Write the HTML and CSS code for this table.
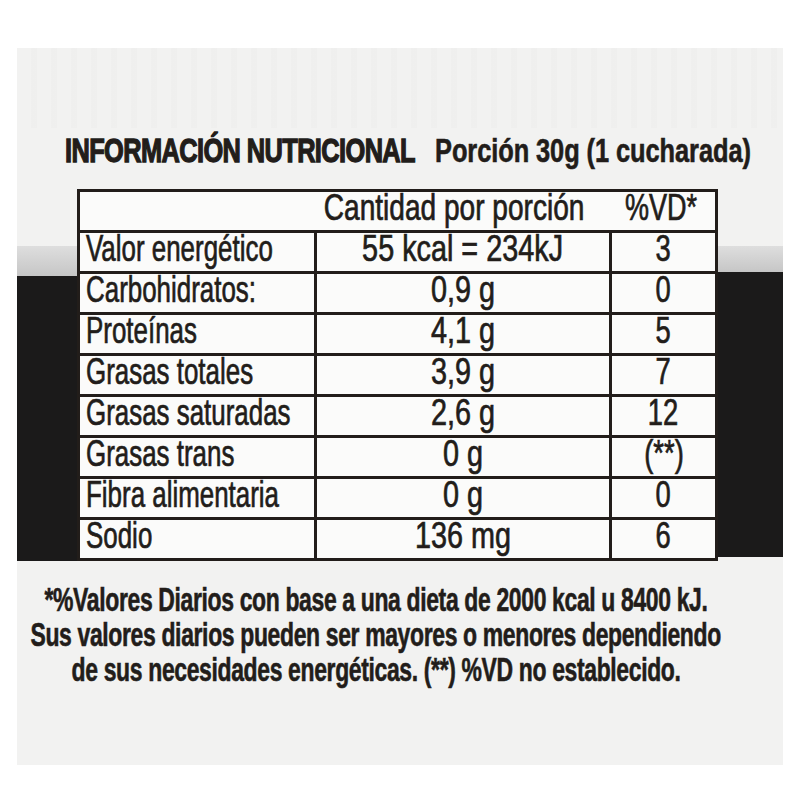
FILE: index.html
```html
<!DOCTYPE html>
<html lang="es">
<head>
<meta charset="utf-8">
<title>Información nutricional</title>
<link rel="stylesheet" href="styles.css">
</head>
<body>
<div class="panel">
  <div class="ridges"></div>
  <div class="title"><span class="tq"><span class="t1">INFORMACIÓN NUTRICIONAL</span><span class="t2">Porción 30g (1 cucharada)</span></span></div>
  <div class="mid">
    <div class="side left"><div class="gap"></div><div class="grey"></div><div class="dark"></div></div>
    <div class="table">
      <div class="hdr"><span class="cell c1"></span><span class="cell c2 h2"><span class="sq">Cantidad por porción</span></span><span class="cell c3 h3"><span class="sq">%VD*</span></span></div>
      <div class="row"><span class="cell c1"><span class="sq">Valor energético</span></span><span class="cell c2"><span class="sq">55 kcal = 234kJ</span></span><span class="cell c3"><span class="sq">3</span></span></div>
      <div class="row"><span class="cell c1"><span class="sq">Carbohidratos:</span></span><span class="cell c2"><span class="sq">0,9 g</span></span><span class="cell c3"><span class="sq">0</span></span></div>
      <div class="row"><span class="cell c1"><span class="sq">Proteínas</span></span><span class="cell c2"><span class="sq">4,1 g</span></span><span class="cell c3"><span class="sq">5</span></span></div>
      <div class="row"><span class="cell c1"><span class="sq">Grasas totales</span></span><span class="cell c2"><span class="sq">3,9 g</span></span><span class="cell c3"><span class="sq">7</span></span></div>
      <div class="row"><span class="cell c1"><span class="sq">Grasas saturadas</span></span><span class="cell c2"><span class="sq">2,6 g</span></span><span class="cell c3"><span class="sq">12</span></span></div>
      <div class="row"><span class="cell c1"><span class="sq">Grasas trans</span></span><span class="cell c2"><span class="sq">0 g</span></span><span class="cell c3"><span class="sq">(**)</span></span></div>
      <div class="row"><span class="cell c1"><span class="sq">Fibra alimentaria</span></span><span class="cell c2"><span class="sq">0 g</span></span><span class="cell c3"><span class="sq">0</span></span></div>
      <div class="row"><span class="cell c1"><span class="sq">Sodio</span></span><span class="cell c2"><span class="sq">136 mg</span></span><span class="cell c3"><span class="sq">6</span></span></div>
    </div>
    <div class="side right"><div class="gap"></div><div class="grey"></div><div class="dark"></div></div>
  </div>
  <div class="foot">
    <p><span class="fq">*%Valores Diarios con base a una dieta de 2000 kcal u 8400 kJ.</span></p>
    <p><span class="fq">Sus valores diarios pueden ser mayores o menores dependiendo</span></p>
    <p><span class="fq">de sus necesidades energéticas. (**) %VD no establecido.</span></p>
  </div>
</div>
</body>
</html>
```
FILE: styles.css
```css
html, body {
  margin: 0;
  padding: 0;
  background: #ffffff;
}
body {
  font-family: "Liberation Sans", Arial, sans-serif;
  color: #221d1a;
}
.panel {
  position: relative;
  margin: 48px 0 0 17px;
  width: 766px;
  height: 717px;
  background: #f2f2f1;
  display: flex;
  flex-direction: column;
  overflow: hidden;
}
.ridges {
  position: absolute;
  left: 0;
  top: 0;
  width: 100%;
  height: 80px;
  background: repeating-linear-gradient(90deg, rgba(0,0,0,0) 0 14px, rgba(0,0,0,0.012) 14px 20px);
}
.title {
  position: relative;
  padding: 84px 0 0 48px;
  height: 38px;
  line-height: 38px;
  white-space: nowrap;
  font-weight: 700;
  font-size: 33px;
}
.tq {
  display: inline-block;
  transform: scaleX(0.77);
  transform-origin: left center;
}
.t1 {
  letter-spacing: -0.8px;
  margin-right: 26px;
  -webkit-text-stroke: 1.3px #221d1a;
}
.t2 {
  letter-spacing: -0.1px;
  -webkit-text-stroke: 0.6px #221d1a;
}
.mid {
  margin-top: 19px;
  display: flex;
}
.side {
  display: flex;
  flex-direction: column;
}
.side.left { width: 60px; }
.side.right { width: 65px; }
.side .gap { height: 57px; }
.side .grey {
  height: 30px;
  background: linear-gradient(180deg, #dedede, #c6c6c6);
}
.side .dark {
  flex: 1;
  background: #1b1a1a;
}
.side.right .grey { height: 26px; }
.side.right .dark { margin-bottom: 4px; }
.table {
  width: 635px;
  border: 3px solid #221d1a;
  background: #fbfbfa;
  font-size: 36px;
}
.hdr, .row {
  display: grid;
  grid-template-columns: 237px 295px 1fr;
  height: 38px;
}
.row {
  border-top: 3px solid #221d1a;
}
.cell {
  display: flex;
  align-items: flex-start;
  justify-content: center;
  line-height: 32px;
  white-space: nowrap;
  min-width: 0;
}
.row .c1, .row .c2 {
  border-right: 3px solid #221d1a;
}
.c1 {
  justify-content: flex-start;
  padding-left: 6px;
}
.sq {
  display: inline-block;
  flex: none;
  transform: scaleX(0.76);
  transform-origin: center center;
  -webkit-text-stroke: 0.7px #221d1a;
}
.c1 .sq {
  transform: scaleX(0.72);
  transform-origin: left center;
}
.row .c2 .sq { transform: scaleX(0.8); }
.h2 { padding-right: 20px; }
.h2 .sq { transform: scaleX(0.78); }
.h3 { padding-right: 4px; }
.h3 .sq { transform: scaleX(0.75); }
.foot {
  margin-top: 21px;
  padding-right: 48px;
  font-weight: 700;
  font-size: 33px;
  line-height: 35px;
}
.foot p {
  margin: 0;
  display: flex;
  justify-content: center;
  white-space: nowrap;
}
.fq {
  display: inline-block;
  flex: none;
  transform: scaleX(0.695);
  transform-origin: center center;
  letter-spacing: -0.5px;
  -webkit-text-stroke: 0.6px #221d1a;
}
```
